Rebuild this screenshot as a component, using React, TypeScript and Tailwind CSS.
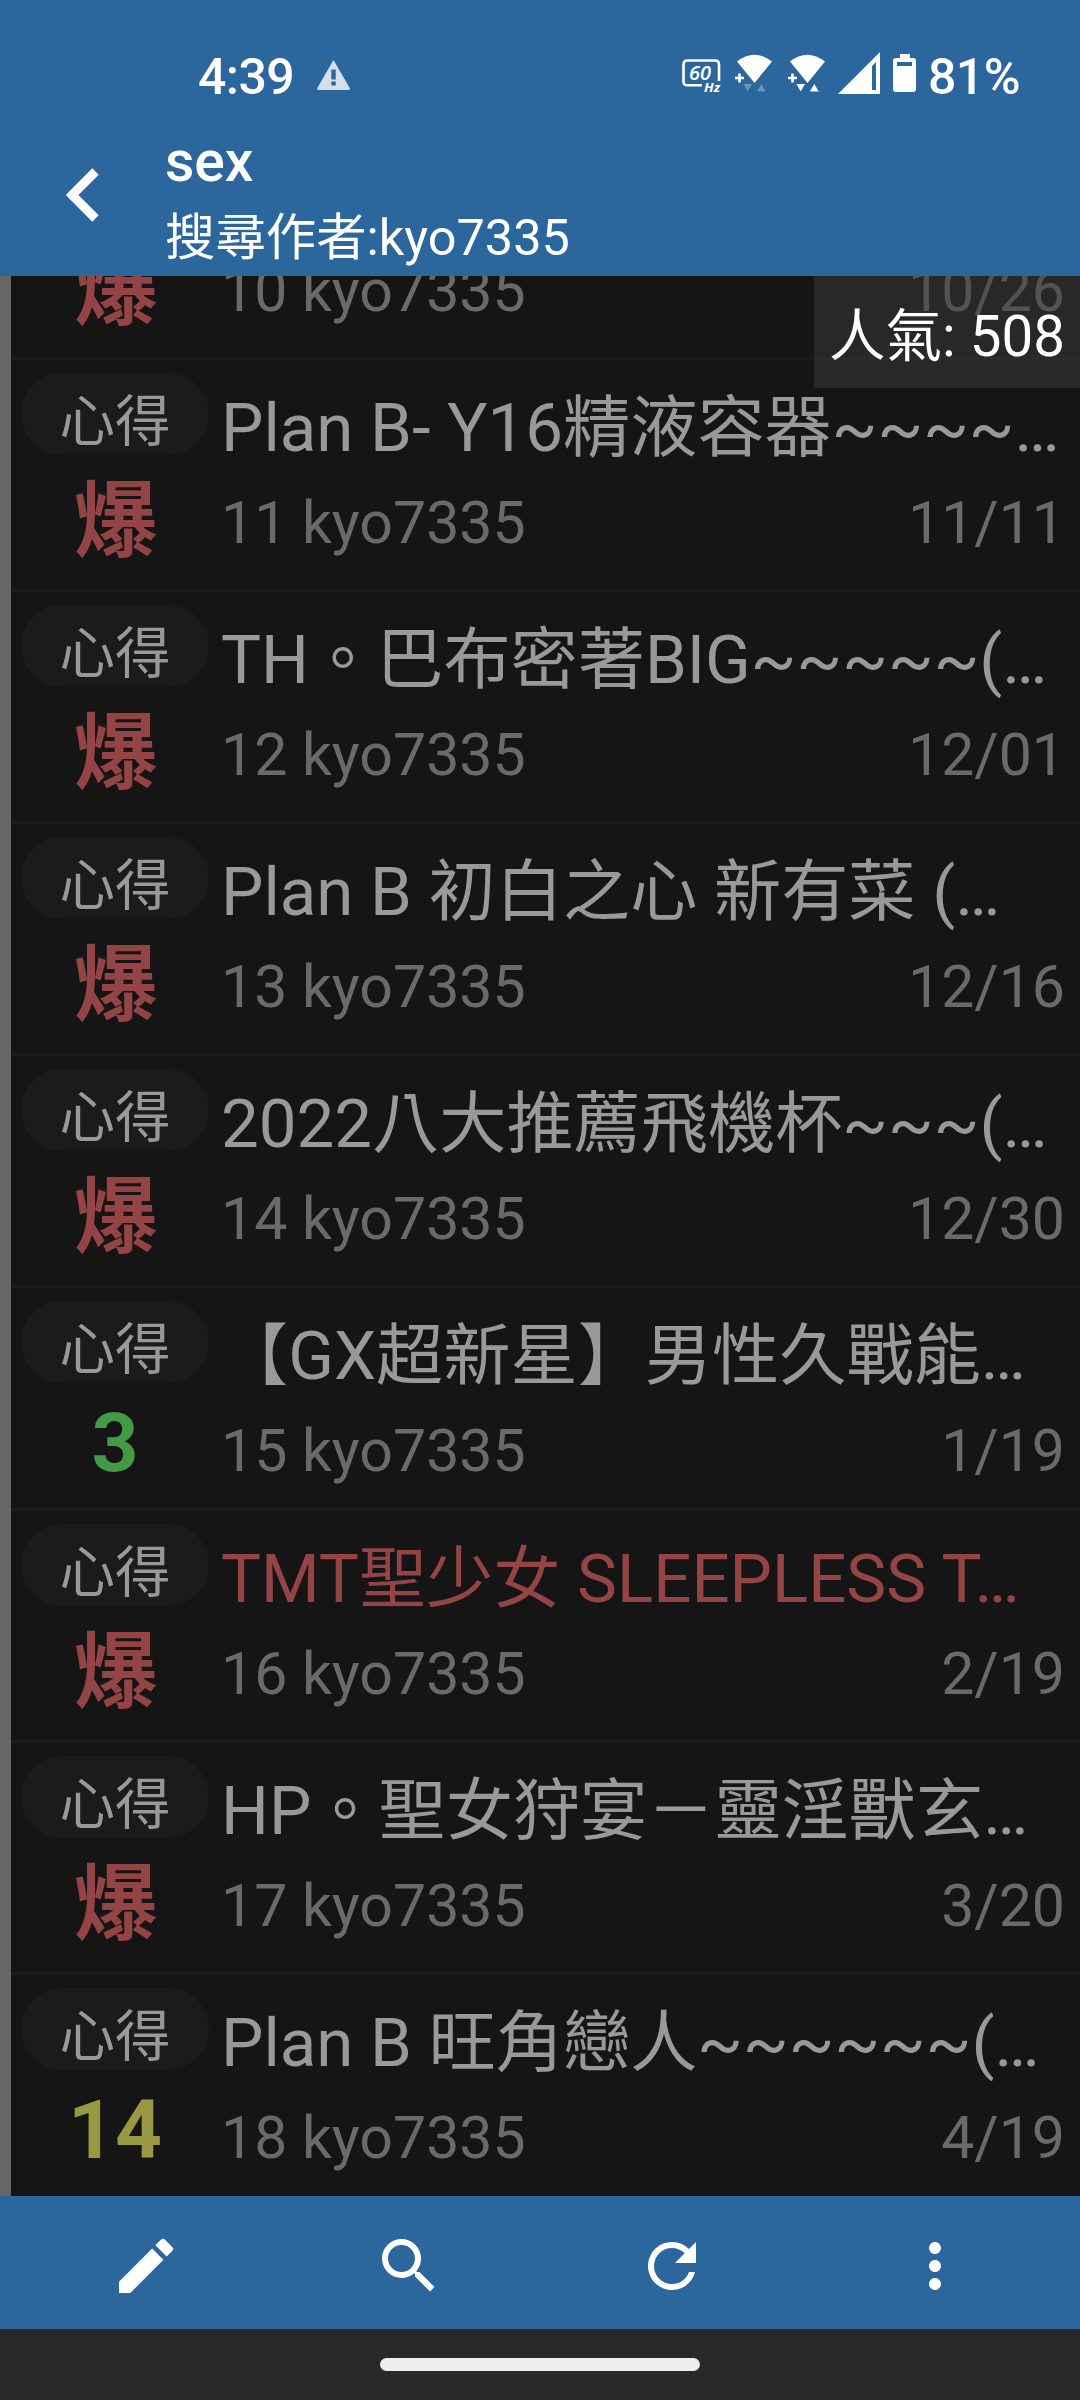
import React from 'react';

type Post = { n: number; title: string; date: string; score: string; marked?: boolean };

const posts: Post[] = [
  { n: 11, title: 'Plan B- Y16精液容器~~~~…', date: '11/11', score: '爆' },
  { n: 12, title: 'TH。巴布密著BIG~~~~~(…', date: '12/01', score: '爆' },
  { n: 13, title: 'Plan B 初白之心 新有菜 (…', date: '12/16', score: '爆' },
  { n: 14, title: '2022八大推薦飛機杯~~~(…', date: '12/30', score: '爆' },
  { n: 15, title: '【GX超新星】男性久戰能…', date: '1/19', score: '3' },
  { n: 16, title: 'TMT聖少女 SLEEPLESS T…', date: '2/19', score: '爆', marked: true },
  { n: 17, title: 'HP。聖女狩宴－靈淫獸玄…', date: '3/20', score: '爆' },
  { n: 18, title: 'Plan B 旺角戀人~~~~~~(…', date: '4/19', score: '14' },
];

function Score({ value }: { value: string }) {
  if (value === '爆') {
    return <div className="mt-[7px] h-[120px] pl-[2px] text-center text-[83.5px] leading-[120px] font-bold text-[#944444]">爆</div>;
  }
  return (
    <div
      className={`h-[120px] text-center text-[82px] leading-[120px] font-bold ${value === '3' ? 'text-[#449944]' : 'text-[#999944]'}`}
    >
      {value}
    </div>
  );
}

function Row({ post }: { post: Post }) {
  return (
    <div className={`flex shrink-0 border-b-[3px] border-[#1b1b1b] pl-[10px] ${post.score === '爆' ? 'h-[232px]' : 'h-[223px]'}`}>
      <div className="w-[188px] shrink-0 pt-[13px]">
        <div className="h-[82px] rounded-[41px] bg-[#1b1b1b] pt-[19px] text-center text-[55.5px] leading-[62px] text-[#999999]">心得</div>
        <Score value={post.score} />
      </div>
      <div className="ml-[12px] min-w-0 flex-1 pt-[28px] pr-[15px]">
        <div className={`h-[80px] text-[67.2px] leading-[80px] whitespace-nowrap ${post.marked ? 'text-[#944444]' : 'text-[#999999]'}`}>
          {post.title}
        </div>
        <div className="mt-[20px] flex justify-between text-[59px] leading-[70px] text-[#6a6a6a]">
          <span>{post.n} kyo7335</span>
          <span>{post.date}</span>
        </div>
      </div>
    </div>
  );
}

function Wifi({ idle }: { idle?: boolean }) {
  return (
    <svg width="38" height="38" viewBox="0 0 38 38" fill="#fff">
      <path d="M2 7.500Q19-6 37 7.500L19.500 29Z" />
      <path d="M4.500 19.500v9M0 24h9" stroke="#fff" strokeWidth="2.6" />
      <g opacity={idle ? 0.3 : 1}>
        <path d="M8.500 30h8.500l-4.300 7.500ZM26.300 30l4.400 7.500h-8.800Z" />
      </g>
    </svg>
  );
}

export default function App() {
  return (
    <div className="flex h-[2400px] w-[1080px] flex-col overflow-hidden bg-[#151515] font-['Roboto','Noto_Sans_CJK_TC',sans-serif]">
      <header className="h-[276px] shrink-0 bg-[#2b669d] text-white">
        <div className="flex h-[138px] items-center pt-[8px] pl-[198px]">
          <span className="mt-[7px] w-[119px] text-[50px] leading-[60px] font-medium tracking-[-0.6px]">4:39</span>
          <svg className="mt-[3px]" width="33" height="30" viewBox="0 0 33 30" fill="#d5dfee">
            <path fillRule="evenodd" d="M16.500 0L33 28.500Q33 30 31 30H2Q0 30 0 28.500ZM14.300 9.500V19.500H18.700V9.500ZM14.300 21.500V25.500H18.700V21.500Z" />
          </svg>
          <div className="ml-[332px] flex items-center">
            <svg className="mt-[6px]" width="39" height="34" viewBox="0 0 39 34" fill="none" stroke="#fff" strokeWidth="2.600">
              <path d="M20 26.300H5.500Q1.500 26.300 1.500 22.300V5.500Q1.500 1.500 5.500 1.500H33Q37 1.500 37 5.500V22" />
              <text x="7" y="20.500" fontSize="20" fontStyle="italic" fontWeight="600" fill="#fff" stroke="none" textLength="22" lengthAdjust="spacingAndGlyphs" className="font-['Open_Sans']">60</text>
              <text x="22" y="33" fontSize="12.500" fontStyle="italic" fontWeight="700" fill="#fff" stroke="none" textLength="16" lengthAdjust="spacingAndGlyphs" className="font-['Open_Sans']">Hz</text>
            </svg>
            <div className="ml-[14px]"><Wifi idle /></div>
            <div className="ml-[15px]"><Wifi /></div>
            <svg className="ml-[12px]" width="42" height="42" viewBox="0 0 42 42" fill="#fff">
              <path fillRule="evenodd" d="M42 0V42H0ZM38 10L34 14V38H38Z" />
            </svg>
            <svg className="ml-[13px]" width="23" height="38" viewBox="0 0 23 38" fill="#fff">
              <path fillRule="evenodd" d="M7 0H17V4H20Q23 4 23 7V35Q23 38 20 38H3Q0 38 0 35V7Q0 4 3 4H7ZM4 8V12H19V8Z" />
            </svg>
            <span className="mt-[7px] ml-[12px] text-[50px] leading-[60px] font-medium tracking-[-0.6px]">81%</span>
          </div>
        </div>
        <div className="flex h-[138px]">
          <svg className="mt-[30px] ml-[66px]" width="33" height="54" viewBox="0 0 33 54" fill="none" stroke="#fff" strokeWidth="9">
            <path d="M29.500 3.500L6 27L29.500 50.500" />
          </svg>
          <div className="ml-[66px]">
            <div className="-mt-[8px] h-[64px] text-[57px] leading-[64px] font-medium">sex</div>
            <div className="mt-[14px] h-[60px] text-[50.4px] leading-[60px]">搜尋作者:kyo7335</div>
          </div>
        </div>
      </header>

      <main className="relative flex h-[1920px] shrink-0 flex-col overflow-hidden border-l-[11px] border-[#666666]">
        <div className="flex h-[84px] shrink-0 flex-col justify-end overflow-hidden">
          <Row post={{ n: 10, title: '', date: '10/26', score: '爆' }} />
        </div>
        {posts.map((p) => (
          <Row key={p.n} post={p} />
        ))}
        <div className="absolute top-0 right-0 h-[112px] w-[266px] bg-[#3b3b3b]/50 pt-[28px] pr-[15px] text-right text-[56.5px] leading-[66px] text-white">
          人氣: 508
        </div>
      </main>

      <nav className="grid h-[133px] shrink-0 grid-cols-4 bg-[#2b669d] pt-[6px] pr-[14px] pl-[15px] text-white">
        {[
          'M3 17.250V21h3.750L17.810 9.940l-3.750-3.750L3 17.250ZM20.710 7.040a1 1 0 0 0 0-1.410l-2.340-2.340a1 1 0 0 0-1.410 0l-1.830 1.830 3.750 3.750 1.830-1.830Z',
          'M15.500 14h-.79l-.28-.27A6.471 6.471 0 0 0 16 9.500 6.500 6.500 0 1 0 9.500 16c1.610 0 3.090-.59 4.230-1.570l.27.28v.79l5 4.990L20.490 19l-4.990-5Zm-6 0C7.010 14 5 11.990 5 9.500S7.010 5 9.500 5 14 7.010 14 9.500 11.990 14 9.500 14Z',
          'M17.650 6.350A7.958 7.958 0 0 0 12 4a8 8 0 1 0 7.730 10h-2.080A5.990 5.990 0 0 1 12 18a6 6 0 1 1 0-12c1.660 0 3.140.69 4.220 1.780L13 11h7V4l-2.350 2.350Z',
          'M12 8c1.100 0 2-.9 2-2s-.9-2-2-2-2 .9-2 2 .9 2 2 2Zm0 2c-1.100 0-2 .9-2 2s.9 2 2 2 2-.9 2-2-.9-2-2-2Zm0 6c-1.100 0-2 .9-2 2s.9 2 2 2 2-.9 2-2-.9-2-2-2Z',
        ].map((d) => (
          <div key={d} className="flex items-center justify-center">
            <svg width="72" height="72" viewBox="0 0 24 24" fill="currentColor">
              <path d={d} />
            </svg>
          </div>
        ))}
      </nav>
      <div className="flex h-[71px] shrink-0 justify-center bg-[#282828] pt-[29px]">
        <div className="h-[13px] w-[320px] rounded-full bg-[#eeeeee]" />
      </div>
    </div>
  );
}
